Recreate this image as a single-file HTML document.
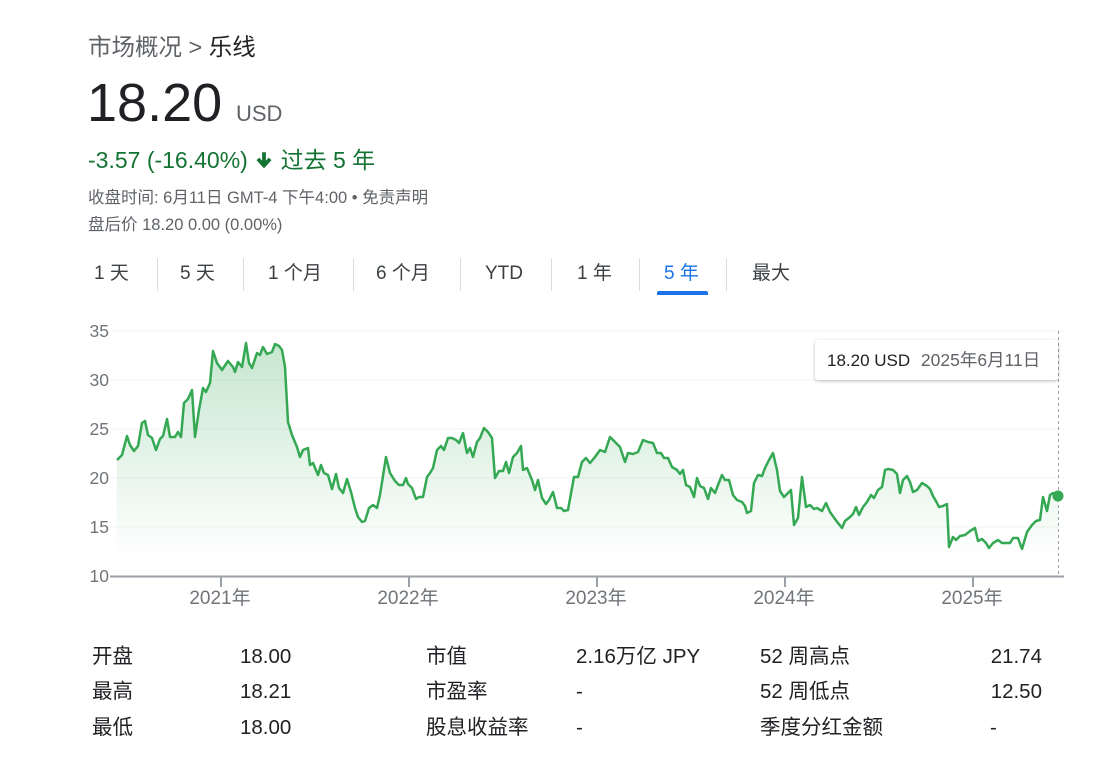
<!DOCTYPE html>
<html><head><meta charset="utf-8"><style>
*{margin:0;padding:0;box-sizing:border-box}
body{width:1119px;height:768px;background:#fff;position:relative;overflow:hidden;font-family:"Liberation Sans","Noto Sans CJK SC",sans-serif;color:#202124}
.a{position:absolute;white-space:nowrap}
.tab{position:absolute;top:261px;font-size:19px;color:#3c4043;line-height:26px}
.sep{position:absolute;top:258px;width:1px;height:33px;background:#dadce0}
.st{position:absolute;font-size:20.5px;color:#202124;line-height:24px}
</style></head><body>
<div class="a" style="left:88px;top:28px;font-size:23.5px;color:#5f6368">市场概况 &gt; <span style="color:#202124">乐线</span></div>
<div class="a" style="left:87px;top:72px;font-size:54px;line-height:62px;color:#202124">18.20</div>
<div class="a" style="left:236px;top:101px;font-size:22px;color:#5f6368">USD</div>
<div class="a" style="left:88px;top:141px;font-size:23px;color:#137333">-3.57 (-16.40%) <svg width="20" height="20" viewBox="0 0 18 18" style="vertical-align:-2px"><path d="M9 2v11M3.5 8L9 14l5.5-6" stroke="#137333" stroke-width="3.4" fill="none"/></svg> 过去 5 年</div>
<div class="a" style="left:88px;top:184px;font-size:16.5px;color:#5f6368">收盘时间: 6月11日 GMT-4 下午4:00 • 免责声明</div>
<div class="a" style="left:88px;top:211px;font-size:16.5px;color:#5f6368">盘后价 18.20 0.00 (0.00%)</div>

<div class="tab" style="left:94px">1 天</div>
<div class="sep" style="left:157px"></div>
<div class="tab" style="left:180px">5 天</div>
<div class="sep" style="left:243px"></div>
<div class="tab" style="left:268px">1 个月</div>
<div class="sep" style="left:353px"></div>
<div class="tab" style="left:376px">6 个月</div>
<div class="sep" style="left:460px"></div>
<div class="tab" style="left:485px">YTD</div>
<div class="sep" style="left:551px"></div>
<div class="tab" style="left:577px">1 年</div>
<div class="sep" style="left:639px"></div>
<div class="tab" style="left:664px;color:#1a73e8">5 年</div>
<div style="position:absolute;left:657px;top:291px;width:51px;height:4px;border-radius:2px 2px 0 0;background:#1a73e8"></div>
<div class="sep" style="left:726px"></div>
<div class="tab" style="left:752px">最大</div>

<svg class="a" style="left:0;top:0" width="1119" height="620" viewBox="0 0 1119 620">
<defs><linearGradient id="g" gradientUnits="userSpaceOnUse" x1="0" y1="340" x2="0" y2="560"><stop offset="0" stop-color="#34a853" stop-opacity="0.28"/><stop offset="1" stop-color="#34a853" stop-opacity="0"/></linearGradient></defs>
<g stroke="#f1f3f4" stroke-width="1"><line x1="110" y1="331" x2="1064" y2="331"/><line x1="110" y1="380" x2="1064" y2="380"/><line x1="110" y1="429" x2="1064" y2="429"/><line x1="110" y1="478" x2="1064" y2="478"/><line x1="110" y1="527" x2="1064" y2="527"/></g>
<g font-size="17.5" fill="#70757a" text-anchor="end"><text x="109" y="337">35</text><text x="109" y="386">30</text><text x="109" y="435">25</text><text x="109" y="484">20</text><text x="109" y="533">15</text><text x="109" y="582">10</text></g>
<polygon fill="url(#g)" points="116,576 117,460 122,455 127,436 130,445 134,451 138,446 142,423 145,421 148,435 152,438 156,450 160,439 163,436 167,419 170,437 175,437 178,432 181,437 184,403 188,399 192,390 195,437 199,410 203,388 206,392 210,383 213,351 217,363 222,370 228,361 233,367 235,372 238,362 242,367 246,343 249,363 252,368 257,353 260,355 263,347 267,354 272,352 275,344 279,346 282,350 285,367 288,422 292,435 297,447 300,457 303,450 308,448 310,465 313,463 318,475 321,465 324,473 328,475 332,489 336,474 339,488 343,493 347,479 351,492 355,508 358,517 362,522 365,521 369,508 373,505 377,508 380,495 386,457 390,473 395,481 399,485 403,485 406,478 408,484 412,488 416,499 419,497 423,497 427,477 430,473 433,468 437,450 441,446 444,450 448,438 452,438 456,440 459,443 463,433 467,453 470,448 473,457 477,442 480,438 484,428 488,432 492,438 495,478 499,471 503,471 506,462 509,473 513,457 517,453 521,446 523,470 527,468 532,480 535,490 538,480 542,498 546,504 549,500 553,492 557,508 561,508 564,511 568,510 574,477 578,477 582,462 586,458 590,463 595,457 600,450 605,452 610,437 615,442 620,447 625,462 628,453 633,454 638,452 643,440 648,442 653,443 657,453 661,453 664,458 668,458 672,467 677,470 680,474 683,470 686,485 690,487 694,497 697,478 700,486 704,488 708,499 711,488 715,493 718,485 722,475 725,480 729,480 733,495 737,500 742,502 745,506 747,513 751,511 754,483 758,475 762,476 765,468 769,460 773,453 777,470 780,491 784,497 791,490 794,525 798,518 802,477 806,507 810,505 814,509 817,508 822,511 826,503 830,512 835,519 838,523 842,528 845,521 850,517 853,514 856,507 859,515 863,507 867,502 871,495 874,498 878,490 882,487 885,470 888,469 893,470 897,474 900,493 903,480 907,476 910,482 913,492 917,490 922,483 927,486 930,489 933,496 937,503 939,507 943,506 947,504 949,547 953,537 956,540 960,536 965,535 970,531 975,528 978,541 982,539 986,543 989,548 993,543 998,540 1002,543 1010,543 1013,538 1018,538 1022,549 1027,532 1032,525 1036,521 1040,520 1043,497 1047,511 1050,495 1053,493 1058,496 1058,576"/>
<polyline fill="none" stroke="#34a853" stroke-width="2.5" stroke-linejoin="round" points="117,460 122,455 127,436 130,445 134,451 138,446 142,423 145,421 148,435 152,438 156,450 160,439 163,436 167,419 170,437 175,437 178,432 181,437 184,403 188,399 192,390 195,437 199,410 203,388 206,392 210,383 213,351 217,363 222,370 228,361 233,367 235,372 238,362 242,367 246,343 249,363 252,368 257,353 260,355 263,347 267,354 272,352 275,344 279,346 282,350 285,367 288,422 292,435 297,447 300,457 303,450 308,448 310,465 313,463 318,475 321,465 324,473 328,475 332,489 336,474 339,488 343,493 347,479 351,492 355,508 358,517 362,522 365,521 369,508 373,505 377,508 380,495 386,457 390,473 395,481 399,485 403,485 406,478 408,484 412,488 416,499 419,497 423,497 427,477 430,473 433,468 437,450 441,446 444,450 448,438 452,438 456,440 459,443 463,433 467,453 470,448 473,457 477,442 480,438 484,428 488,432 492,438 495,478 499,471 503,471 506,462 509,473 513,457 517,453 521,446 523,470 527,468 532,480 535,490 538,480 542,498 546,504 549,500 553,492 557,508 561,508 564,511 568,510 574,477 578,477 582,462 586,458 590,463 595,457 600,450 605,452 610,437 615,442 620,447 625,462 628,453 633,454 638,452 643,440 648,442 653,443 657,453 661,453 664,458 668,458 672,467 677,470 680,474 683,470 686,485 690,487 694,497 697,478 700,486 704,488 708,499 711,488 715,493 718,485 722,475 725,480 729,480 733,495 737,500 742,502 745,506 747,513 751,511 754,483 758,475 762,476 765,468 769,460 773,453 777,470 780,491 784,497 791,490 794,525 798,518 802,477 806,507 810,505 814,509 817,508 822,511 826,503 830,512 835,519 838,523 842,528 845,521 850,517 853,514 856,507 859,515 863,507 867,502 871,495 874,498 878,490 882,487 885,470 888,469 893,470 897,474 900,493 903,480 907,476 910,482 913,492 917,490 922,483 927,486 930,489 933,496 937,503 939,507 943,506 947,504 949,547 953,537 956,540 960,536 965,535 970,531 975,528 978,541 982,539 986,543 989,548 993,543 998,540 1002,543 1010,543 1013,538 1018,538 1022,549 1027,532 1032,525 1036,521 1040,520 1043,497 1047,511 1050,495 1053,493 1058,496"/>
<line x1="1058.5" y1="331" x2="1058.5" y2="576" stroke="#9aa0a6" stroke-dasharray="3,3"/>
<line x1="110" y1="576.5" x2="1064" y2="576.5" stroke="#9aa0a6" stroke-width="2"/>
<g stroke="#9aa0a6" stroke-width="2"><line x1="221" y1="576" x2="221" y2="587"/><line x1="409" y1="576" x2="409" y2="587"/><line x1="597" y1="576" x2="597" y2="587"/><line x1="785" y1="576" x2="785" y2="587"/><line x1="973" y1="576" x2="973" y2="587"/></g>
<g font-size="19" fill="#70757a" text-anchor="middle" font-family="Liberation Sans, Noto Sans CJK SC, sans-serif"><text x="220" y="604">2021年</text><text x="408" y="604">2022年</text><text x="596" y="604">2023年</text><text x="784" y="604">2024年</text><text x="972" y="604">2025年</text></g>
<circle cx="1058" cy="496" r="5.5" fill="#34a853"/>
</svg>
<div class="a" style="left:815px;top:340px;width:243px;height:40px;background:#fff;border-radius:3px;box-shadow:0 1px 3px rgba(60,64,67,.35);font-size:17px;line-height:40px;padding-left:12px;color:#202124">18.20 USD <span style="color:#5f6368;margin-left:6px;font-size:17.5px">2025年6月11日</span></div>

<div class="st" style="left:92px;top:645px">开盘</div><div class="st" style="left:240px;top:645px">18.00</div>
<div class="st" style="left:426px;top:645px">市值</div><div class="st" style="left:576px;top:645px">2.16万亿 JPY</div>
<div class="st" style="left:760px;top:645px">52 周高点</div><div class="st" style="right:77px;top:645px">21.74</div>
<div class="st" style="left:92px;top:680px">最高</div><div class="st" style="left:240px;top:680px">18.21</div>
<div class="st" style="left:426px;top:680px">市盈率</div><div class="st" style="left:576px;top:680px">-</div>
<div class="st" style="left:760px;top:680px">52 周低点</div><div class="st" style="right:77px;top:680px">12.50</div>
<div class="st" style="left:92px;top:716px">最低</div><div class="st" style="left:240px;top:716px">18.00</div>
<div class="st" style="left:426px;top:716px">股息收益率</div><div class="st" style="left:576px;top:716px">-</div>
<div class="st" style="left:760px;top:716px">季度分红金额</div><div class="st" style="left:990px;top:716px">-</div>
</body></html>
